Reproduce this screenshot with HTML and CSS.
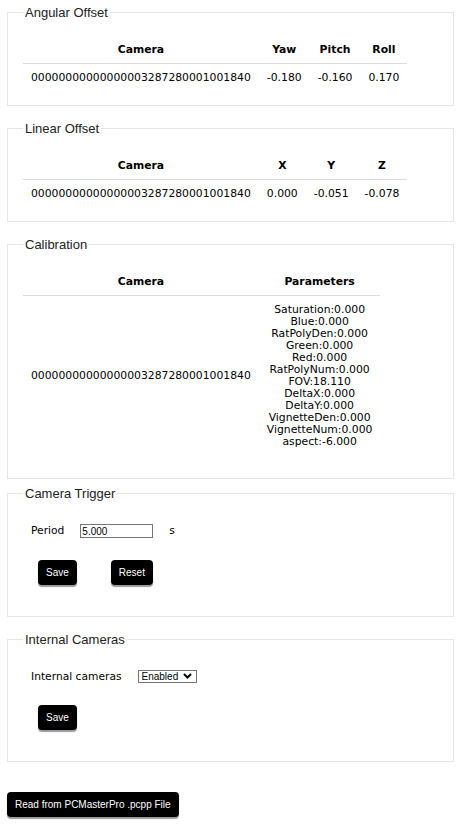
FILE: index.html
```html
<!DOCTYPE html>
<html lang="en">
<head>
<meta charset="utf-8">
<title>Camera Settings</title>
<link rel="stylesheet" href="styles.css">
</head>
<body>
<fieldset class="panel">
  <legend>Angular Offset</legend>
  <table class="data">
    <thead>
      <tr><th>Camera</th><th>Yaw</th><th>Pitch</th><th>Roll</th></tr>
    </thead>
    <tbody>
      <tr><td>00000000000000003287280001001840</td><td>-0.180</td><td>-0.160</td><td>0.170</td></tr>
    </tbody>
  </table>
</fieldset>

<fieldset class="panel">
  <legend>Linear Offset</legend>
  <table class="data">
    <thead>
      <tr><th>Camera</th><th>X</th><th>Y</th><th>Z</th></tr>
    </thead>
    <tbody>
      <tr><td>00000000000000003287280001001840</td><td>0.000</td><td>-0.051</td><td>-0.078</td></tr>
    </tbody>
  </table>
</fieldset>

<fieldset class="panel panel--calibration">
  <legend>Calibration</legend>
  <table class="data">
    <thead>
      <tr><th>Camera</th><th>Parameters</th></tr>
    </thead>
    <tbody>
      <tr>
        <td>00000000000000003287280001001840</td>
        <td class="params">Saturation:0.000<br>Blue:0.000<br>RatPolyDen:0.000<br>Green:0.000<br>Red:0.000<br>RatPolyNum:0.000<br>FOV:18.110<br>DeltaX:0.000<br>DeltaY:0.000<br>VignetteDen:0.000<br>VignetteNum:0.000<br>aspect:-6.000</td>
      </tr>
    </tbody>
  </table>
</fieldset>

<fieldset class="panel panel--form">
  <legend>Camera Trigger</legend>
  <div class="field-row">
    <label class="field-label" for="period">Period</label>
    <input id="period" class="text-input" type="text" value="5.000">
    <span class="unit">s</span>
  </div>
  <div class="btn-row">
    <button class="btn" type="button">Save</button>
    <button class="btn" type="button">Reset</button>
  </div>
</fieldset>

<fieldset class="panel panel--form">
  <legend>Internal Cameras</legend>
  <div class="field-row">
    <label class="field-label" for="internal">Internal cameras</label>
    <span class="select-wrap">
      <select id="internal" class="select">
        <option>Enabled</option>
        <option>Disabled</option>
      </select>
      <svg class="select-arrow" viewBox="0 0 9 6" aria-hidden="true"><polyline points="1,1 4.5,4.5 8,1" fill="none" stroke="#000" stroke-width="2"/></svg>
    </span>
  </div>
  <div class="btn-row">
    <button class="btn" type="button">Save</button>
  </div>
</fieldset>

<div class="actions">
  <button class="btn" type="button">Read from PCMasterPro .pcpp File</button>
</div>
</body>
</html>
```

FILE: styles.css
```css
html, body {
  background: #fff;
}

body {
  margin: 0;
  padding: 4px 5px;
  font-family: "DejaVu Sans", Verdana, sans-serif;
  color: #000;
}

.panel {
  margin: 0 2px 14px;
  padding: 0 15px 13px;
  border: 1px solid #e6e6e6;
  min-width: 0;
}

.panel legend {
  padding: 0 2px;
  font: 13px/17px "Liberation Sans", Arial, sans-serif;
  color: #222;
}

.panel--calibration {
  padding-bottom: 22px;
  margin-bottom: 6px;
}

.panel--form {
  padding-bottom: 31px;
}

.data {
  border-collapse: collapse;
  margin-top: 17px;
  font-size: 10.8px;
  line-height: 12px;
}

.data th {
  font-weight: bold;
  padding: 6px 8px 7px;
  border-bottom: 1px solid #dcdcdc;
  text-align: center;
}

.data td {
  padding: 8px;
  text-align: center;
  vertical-align: middle;
  white-space: nowrap;
}

.field-row {
  display: flex;
  align-items: center;
  gap: 16px;
  margin-top: 22px;
  padding-left: 8px;
  font-size: 10.7px;
  line-height: 12px;
}

.text-input {
  width: 73px;
  height: 14px;
  box-sizing: border-box;
  margin: 0;
  padding: 0 1px;
  border: 1px solid #767676;
  border-radius: 0;
  font: 10px/12px "Liberation Sans", Arial, sans-serif;
  color: #000;
  background: #fff;
}

.select-wrap {
  position: relative;
  display: inline-flex;
}

.select {
  appearance: none;
  -webkit-appearance: none;
  width: 59px;
  height: 13px;
  box-sizing: border-box;
  margin: 0;
  padding: 0 0 0 3px;
  border: 1px solid #767676;
  border-radius: 0;
  font: 10px/11px "Liberation Sans", Arial, sans-serif;
  color: #000;
  background: #fff;
}

.select-arrow {
  position: absolute;
  right: 5px;
  top: 3px;
  width: 9px;
  height: 6px;
  pointer-events: none;
}

.btn-row {
  display: flex;
  gap: 34px;
  margin-top: 22px;
  padding-left: 15px;
}

.btn {
  height: 25px;
  margin: 0;
  padding: 0 8px;
  border: 0;
  border-radius: 4px;
  background: #000;
  color: #fff;
  font: 10px "Liberation Sans", Arial, sans-serif;
  box-shadow: 0 2px 1px #999;
  cursor: pointer;
}

.actions {
  margin: 30px 2px 0;
}
```
